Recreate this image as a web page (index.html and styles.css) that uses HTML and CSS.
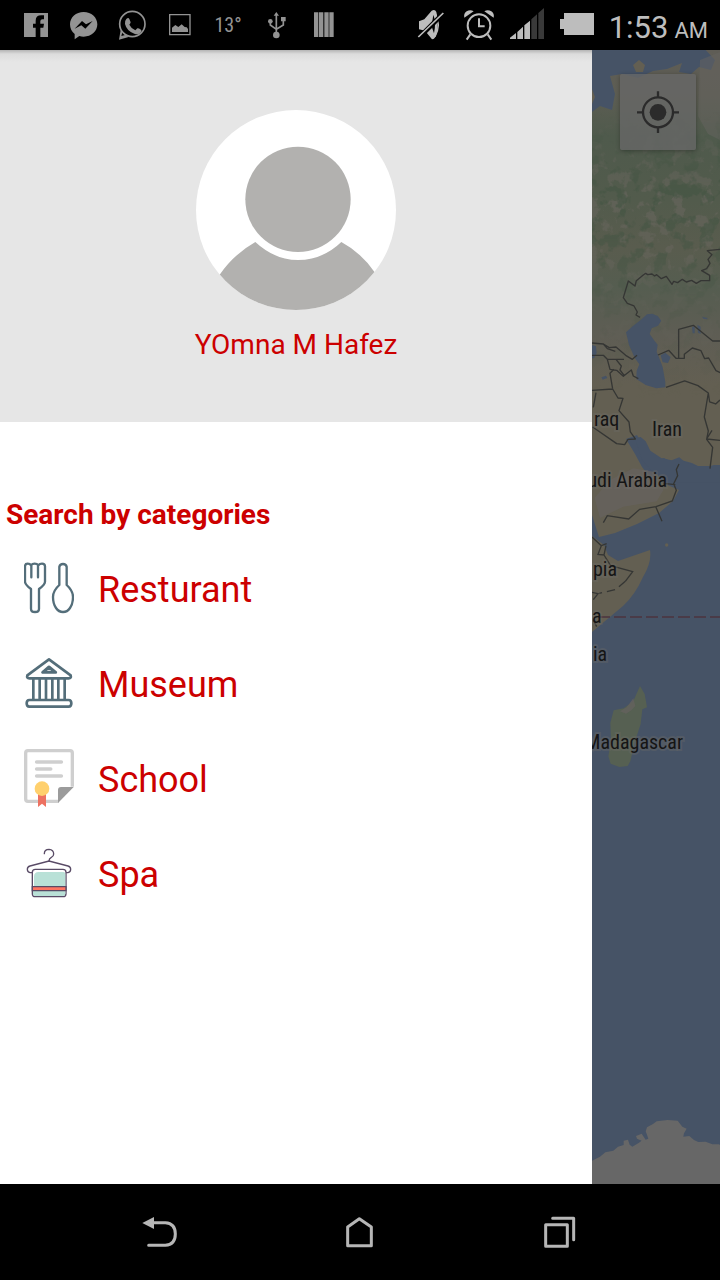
FILE: index.html
```html
<!DOCTYPE html>
<html lang="en">
<head>
<meta charset="utf-8">
<meta name="viewport" content="width=device-width, initial-scale=1">
<title>Search by categories</title>
<link rel="stylesheet" href="styles.css">
</head>
<body>
<div class="screen">
  <header class="status">
    <div class="notices">
      <svg class="notice" viewBox="36 0 144 150" aria-hidden="true"><path fill="#939393" d="M72 39h72v72H72z"/><path d="M107 111V83h-8V71h8v-9q0-16 17-16h8v12h-5q-6 0-6 6v7h11l-2 12h-9v28z"/></svg>
      <svg class="notice" viewBox="180 0 144 150" aria-hidden="true"><path fill="#939393" d="M251 36c23 0 41 16 41 37s-18 37-41 37q-7 0-13-2l-14 10v-16c-9-7-14-17-14-29 0-21 18-37 41-37z"/><path d="M224 86l22-23 12 10 20-10-22 23-12-10z"/></svg>
      <svg class="notice" viewBox="324 0 144 150" aria-hidden="true"><g fill="none" stroke="#939393" stroke-width="5"><circle cx="397" cy="72" r="38"/></g><path fill="#939393" d="M362 90l-5 29 29-8-8-7-14 4 4-14z"/><path fill="#939393" d="M379 57q6-6 9 0l4 10q0 3-4 7 6 12 18 17l6-6q3-1 11 4 3 2 0 7-7 10-20 5-23-8-28-29-1-10 4-15z"/></svg>
      <svg class="notice" viewBox="468 0 144 150" aria-hidden="true"><path fill="none" stroke="#939393" stroke-width="4" d="M509 44h61v60h-61z"/><path fill="#939393" d="M516 96V83l10-8 9 6 10-8 9 8 6 1 4 5v9z"/></svg>
      <span class="notice temp">13°</span>
      <svg class="notice" viewBox="756 0 144 150" aria-hidden="true"><g fill="none" stroke="#939393" stroke-width="5"><path d="M829 42v60M811 65v10l18 13 21-13V58"/></g><g fill="#939393"><path d="M829 36l8 11h-16zM843 51h14v13h-14z"/><circle cx="811" cy="64" r="7"/><circle cx="829" cy="105" r="10"/></g></svg>
      <svg class="notice" viewBox="900 0 144 150" aria-hidden="true"><path fill="#939393" d="M942 37h13v74h-13zM957 37h13v74h-13zM973 37h13v74h-13zM988 37h13v74h-13z"/></svg>
    </div>
    <div class="system">
      <svg class="sys" viewBox="54 0 96 150" aria-hidden="true"><path fill="#bdbdbd" d="M60 64l16-6 22-26q10-6 14 4 8 36 1 64-4 18-14 18L78 92l-18-4z"/><path fill="none" stroke="#bdbdbd" stroke-width="4" d="M108 38q20 36 0 72"/><path d="M103 44q9 22 2 56-8-16-6-30z"/><path stroke="#000" stroke-width="14" d="M60 113l74-74"/><path stroke="#bdbdbd" stroke-width="5" d="M58 111l75-72"/></svg>
      <svg class="sys" viewBox="192 0 96 150" aria-hidden="true"><g fill="none" stroke="#bdbdbd" stroke-width="6"><circle cx="240" cy="77" r="34"/><path d="M240 55v24h17M214 103l-11 16M266 103l11 16"/></g><g fill="#bdbdbd"><path d="M196 53q-3-12 7-19 11-7 21 0zM284 53q3-12-7-19-11-7-21 0z"/></g></svg>
      <svg class="sys" viewBox="330 0 108 150" aria-hidden="true"><path fill="#bdbdbd" d="M333 117v-4l18-14v18zM355 117V96l17-16v37zM376 117V76l17-14v55z"/><path fill="#393939" d="M397 117V58l17-15v74zM418 117V39l17-15v93z"/></svg>
      <svg class="sys" viewBox="480 0 108 150" aria-hidden="true"><path fill="#bdbdbd" d="M495 39h90v66h-90V87h-12V57h12z"/></svg>
      <time class="clock">1:53 <small class="ampm">AM</small></time>
    </div>
  </header>

  <main class="content">
    <aside class="drawer">
      <section class="profile">
        <svg class="avatar" viewBox="48 30 600 600" role="img" aria-label="Profile picture"><clipPath id="disc"><circle cx="348" cy="330" r="300"/></clipPath><g clip-path="url(#disc)"><path fill="#fff" d="M48 30h600v600H48z"/><path fill="#b2b1af" d="M119 524Q162 462 226 426Q284 480 354 480Q428 480 484 426Q544 458 584 517V640H119z"/><circle cx="354" cy="298" r="158" fill="#b2b1af"/></g></svg>
        <p class="name">YOmna M Hafez</p>
      </section>
      <nav class="categories" aria-labelledby="cat-title">
        <h2 class="title" id="cat-title">Search by categories</h2>
        <ul class="list">
          <li><a class="item" href="#restaurant">
            <svg class="icon" viewBox="72 204 150 180" aria-hidden="true"><g fill="none" stroke="#546e7a" stroke-width="7" stroke-linecap="round" stroke-linejoin="round"><path d="M75 229q0-8 8-8 7 0 10 5 4-5 11-5t11 5q4-5 11-5 9 0 9 8v46q0 8-18 22v59q0 10-12 10t-12-10v-59Q75 283 75 275zM94 228v34M114 228v34"/><path d="M178 230q2-8 11-8t11 8v55q19 17 19 36 0 20-9 33-8 12-21 12t-21-12q-9-13-9-33 0-19 19-36z"/></g></svg>
            <span class="label">Resturant</span></a></li>
          <li><a class="item" href="#museum">
            <svg class="icon" viewBox="72 39 150 180" aria-hidden="true"><g fill="none" stroke="#546e7a" stroke-width="8" stroke-linejoin="round"><path d="M147 58L82 106q-3 9 6 9h118q9 0 6-9zM88 180h118q8 0 8 10t-8 10H88q-8 0-8-10t8-10zM100 115v65M119 115v65M138 115v65M157 115v65M175 115v65M194 115v65"/><path stroke-width="9" d="M147 81l-19 16h39z"/></g></svg>
            <span class="label">Museum</span></a></li>
          <li><a class="item" href="#school">
            <svg class="icon" viewBox="72 324 150 180" aria-hidden="true"><path fill="none" stroke="#cfcfcf" stroke-width="10" d="M217 440V339q0-7-7-7H84q-7 0-7 7v138q0 7 7 7h92"/><path fill="#9b9b9b" d="M174 489v-39q0-9 9-9h38z"/><path stroke="#cfcfcf" stroke-width="11" stroke-linecap="round" d="M110 366h74M110 387h42M110 408h74"/><path fill="#ed7161" d="M114 460h24v41l-12-10-12 10z"/><circle cx="126" cy="446" r="22" fill="#ffd06d"/></svg>
            <span class="label">School</span></a></li>
          <li><a class="item" href="#spa">
            <svg class="icon" viewBox="72 39 150 180" aria-hidden="true"><g fill="#fff" stroke="#594b66" stroke-width="4" stroke-linecap="round"><path d="M133 71q0-13 14-13 14 1 14 14 0 7-7 10-7 3-7 11"/><path d="M97 128H90q-8-1-8-10 0-8 8-10l57-15 57 15q8 2 8 10 0 9-8 10h-7"/><rect x="97" y="118" width="101" height="82" rx="9"/></g><path fill="#b9e1d7" d="M102 169v-29q0-14 14-14h74q6 0 6 6v37zM99 183h97v8q0 7-7 7h-83q-7 0-7-7z"/><path fill="#ff7562" stroke="#594b66" stroke-width="4" d="M97 170h101v12H97z"/></svg>
            <span class="label">Spa</span></a></li>
        </ul>
      </nav>
    </aside>

    <section class="map" aria-label="Map">
      <svg class="chart" viewBox="592 50 128 1134" preserveAspectRatio="xMinYMin slice">
        <defs>
          <filter id="woods" x="0" y="0" width="100%" height="100%" color-interpolation-filters="sRGB"><feTurbulence type="fractalNoise" baseFrequency=".07" numOctaves="4" seed="4"/><feColorMatrix values="0 0 0 0 .41 0 0 0 0 .4 0 0 0 0 .37 10 0 0 0 -5.4"/><feComposite in2="SourceGraphic" operator="in"/></filter>
          <filter id="scrub" x="0" y="0" width="100%" height="100%" color-interpolation-filters="sRGB"><feTurbulence type="fractalNoise" baseFrequency=".06" numOctaves="4" seed="9"/><feColorMatrix values="0 0 0 0 .26 0 0 0 0 .33 0 0 0 0 .26 10 0 0 0 -5.4"/><feComposite in2="SourceGraphic" operator="in"/></filter>
          <linearGradient id="fade" x1="0" y1="110" x2="0" y2="400" gradientUnits="userSpaceOnUse"><stop offset="0" stop-opacity="0"/><stop offset=".3" stop-opacity="1"/><stop offset=".5" stop-opacity=".8"/><stop offset=".65" stop-opacity=".3"/><stop offset="1" stop-opacity="0"/></linearGradient>
          <linearGradient id="climate" x1="0" y1="50" x2="0" y2="480" gradientUnits="userSpaceOnUse"><stop offset="0" stop-color="#5f5d56"/><stop offset=".1" stop-color="#5d5d53"/><stop offset=".2" stop-color="#4f5a4c"/><stop offset=".35" stop-color="#525b4c"/><stop offset=".46" stop-color="#595c4e"/><stop offset=".55" stop-color="#555d50"/><stop offset=".66" stop-color="#5e5d54"/><stop offset=".78" stop-color="#635f52"/><stop offset="1" stop-color="#635f52"/></linearGradient>
        </defs>
        <path fill="#465366" d="M592 50h128v1134H592z"/>
        <path fill="url(#climate)" d="M592 112l8-6 12 4 3-16-5-18 12-2 16 4 15-7 14-2 15-6-3 9 12 2 8-7 12 3 4-10-13-14h30v419h-18l-12 3-10-5-11-3-9 2-8-4-12 3-7-12-8-14-11 4 9 15 7 13 10 13 4-7 7 10 16 7-6 11-14 12-22 11-22 9-16 4-7-22-10-22z"/>
        <path fill="#66635f" d="M700 60l20-8v88l-12-6-10-18z" opacity=".5"/>
        <path filter="url(#woods)" opacity=".6" fill="url(#fade)" d="M592 112h128v288H592z"/>
        <path filter="url(#scrub)" opacity=".6" fill="url(#fade)" d="M592 112h128v288H592z"/>
        <path fill="#635f52" d="M592 536l12 9 4 10 10 6 32-11q2 12-7 27-8 18-20 29l-31 26zM633 65l6-5 6 5-2 7h-7zM592 89l3 8-3 7z"/>
        <g transform="translate(580 240) scale(.3333)">
          <path fill="#465366" d="M138 277l20-18 25-20 18-16 16-2 16 7 11 14-10 15-19 8-6 17 15 21 9 11-3 21 8 20 10 26 8 45v16l-27 3-32-10-28-18 1-25 8-19-14-20-17-38zM242 346l14-8 16 14-8 17-16-2zM36 315l12 4 2 20-8 16h-6zM64 412l14-5 4 7-14 5zM336 262l8-4v22h-6zM352 254l10 6v22l-8-4zM366 230l16 4v4l-12-2zM165 595l17-4 15 13 14 28 34 23 30 6 23-9 17 15 36 11h69v50H300l-50-10-40-30-25-30z"/>
          <g fill="none" stroke="#353634" stroke-width="4" stroke-linejoin="round"><path d="M420 28l-38 4 14 12-12 14 6 12-10 16-15 6 24 14v16h-26l-14 8-14-9-16 5-12-8-14 10-12-4-5 9-17-24-15 7-14-12-6 4-8-6-13 2-6-4-8 6-20 16-4 16-20-15-15 50 12 17 20 8 10 18-4 9 12 7"/><path d="M296 355V268l44-12 58 47h22M234 345l32-14 22 24h25v-12l24-19 26 8 11 24 12-2 22 38 18 8M36 309l34 3 18 11 20-2 29 25 20 12 14-12M36 346h34l12 12h50M70 312l12 14 24 8M82 358l8 30 20 3 20 18 24-19 6 18 15 8M108 358l16 20-4 12 13 17M36 451l62-4M98 447l16 27 15 1-12 37 30 34 4 30 15 21-22 1-10 16-24-3-72-50M48 458l-8 44M98 447l-8-47 12-12M258 442l56-19 40 14 31 22-12 72 12 42-5 25 18 24-8 64M385 459l4 27 18 6 13-12M396 571l-16 26 40 4"/></g>
        </g>
        <g transform="translate(580 460) scale(.3333)">
          <path fill="#66635f" opacity=".7" d="M90 60l70-35 60 10 30 55-20 34-100 16-70 34-16-60z"/>
          <g fill="none" stroke="#353634" stroke-width="4"><path d="M70 188l12-21 64 10 33-29 49-8 49-17 12-32-8-20 12-24-4-18 8-17M250 70l36 4M228 142l18 42M36 231l28 26-10 26 18 2 6-28M64 257l16-6M72 285l20 32 66 18-22 29M36 397l18 4-14 18M40 480l10 20"/><path stroke-dasharray="25 15" d="M136 364l-30 25-48 11"/></g>
          <path fill="none" stroke="#4c343f" stroke-width="5" stroke-dasharray="36 12" d="M54 471h366"/>
          <circle cx="260" cy="255" r="5" fill="#635f52"/>
        </g>
        <g transform="translate(580 640) scale(.3333)"><path fill="#566052" d="M180 138l14 24 7 40-14 6-5 44-17 52-14 60-8 14-25 3-26-10-7-22 8-46-2-54 10-38 30-6 28-20z"/><path fill="#64615e" d="M120 214l20-12 20-27 6 23-12 13-16 10z" opacity=".8"/></g>
        <path fill="#676767" transform="translate(580 1090) scale(.3333)" d="M36 212l24-12 16-13 24-5 14-12 17-5v-13l13-3 5 15 8 6 20-12 8-6-14-6-3-8 17-7 12 18 8-3-4-12-4-10 4-12 18-10 11-8 33-4 30 2 14 18 13 6-8 14-2 10 18-2 14 12 13 6 22-1 20 8h20l7 4v118H36z"/>
        <g class="places"><text x="594" y="426">raq</text><text x="652" y="436">Iran</text><text x="667" y="487" text-anchor="end">udi Arabia</text><text x="593" y="576">pia</text><text x="592" y="623">a</text><text x="593" y="661">ia</text><text x="683" y="749" text-anchor="end">Madagascar</text></g>
      </svg>
      <button class="locate" type="button" aria-label="My location"><svg class="target" viewBox="171 122 126 126" aria-hidden="true"><g fill="none" stroke="#2b2b2b" stroke-width="7"><circle cx="234" cy="186" r="45"/><path d="M234 123v20M234 229v20M171 186h20M277 186h20"/></g><circle cx="234" cy="186" r="25" fill="#2b2b2b"/></svg></button>
    </section>
  </main>

  <footer class="keys">
    <button class="key" type="button" aria-label="Back"><svg class="glyph" viewBox="60 66 120 120" aria-hidden="true"><path fill="none" stroke="#b6b6b6" stroke-width="9" stroke-linecap="round" d="M98 98h38q30 2 30 34t-30 34H86"/><path fill="#b6b6b6" d="M67 99l35-18v36z"/></svg></button>
    <button class="key" type="button" aria-label="Home"><svg class="glyph" viewBox="660 66 120 120" aria-hidden="true"><path fill="none" stroke="#b6b6b6" stroke-width="9" stroke-linejoin="round" d="M718 86l36 25v56h-71v-56z"/></svg></button>
    <button class="key" type="button" aria-label="Recent apps"><svg class="glyph" viewBox="1260 66 120 120" aria-hidden="true"><g fill="none" stroke="#b6b6b6" stroke-width="9" stroke-linecap="round" stroke-linejoin="round"><path d="M1277 104h65v65h-65zM1298 85h63v64"/></g></svg></button>
  </footer>
</div>
</body>
</html>
```
FILE: styles.css
```css
* {
  box-sizing: border-box;
}

body {
  margin: 0;
  font-family: Roboto, "Noto Sans", sans-serif;
  color: #cc0000;
  background: #000;
}

button {
  padding: 0;
  border: 0;
  background: none;
}

.screen {
  display: flex;
  flex-direction: column;
  min-height: 100vh;
}

.status {
  display: flex;
  justify-content: space-between;
  height: 50px;
  padding: 0 12px;
  background: #000;
}

.notices,
.system {
  display: flex;
  align-items: center;
}

.notice {
  width: 48px;
  height: 50px;
}

.temp {
  color: #939393;
  font-family: "Roboto Condensed", "Liberation Sans Narrow", Roboto, sans-serif;
  font-size: 20px;
  line-height: 50px;
  text-align: center;
}

.system {
  gap: 14px;
}

.sys {
  height: 50px;
}

.clock {
  display: flex;
  align-items: baseline;
  gap: 6px;
  padding-top: 4px;
  color: #bdbdbd;
  font-size: 31px;
  white-space: nowrap;
}

.ampm {
  font-size: 22px;
}

.content {
  display: flex;
  flex: 1;
}

.drawer {
  flex: 1;
  background: #fff;
}

.profile {
  display: flex;
  flex-direction: column;
  align-items: center;
  gap: 18px;
  padding: 60px 16px;
  background: linear-gradient(#b4b4b4, #dcdcdc 4px, #e6e6e6 12px);
}

.avatar {
  width: 200px;
  height: 200px;
}

.name {
  margin: 0;
  font-size: 28px;
  line-height: 34px;
}

.categories {
  padding-top: 76px;
}

.title {
  margin: 0 0 9px;
  padding-left: 6px;
  font-size: 28px;
  line-height: 33px;
}

.list {
  margin: 0;
  padding: 0;
  list-style: none;
}

.item {
  display: flex;
  align-items: center;
  gap: 24px;
  height: 95px;
  padding: 0 24px;
  color: inherit;
  text-decoration: none;
}

.icon {
  width: 50px;
  height: 60px;
}

.label {
  padding-top: 4px;
  font-size: 36px;
}

.map {
  position: relative;
  flex: 0 0 128px;
  overflow: hidden;
  background: #465366;
}

.chart {
  position: absolute;
  inset: 0;
  width: 100%;
  height: 100%;
}

.places {
  fill: #151515;
  stroke: rgba(110, 108, 104, 0.35);
  stroke-width: 4px;
  paint-order: stroke;
  font-family: "Roboto Condensed", Roboto, sans-serif;
  font-size: 20px;
}

.locate {
  position: absolute;
  top: 24px;
  right: 24px;
  display: grid;
  place-items: center;
  width: 76px;
  height: 76px;
  border-radius: 2px;
  background: rgba(104, 104, 104, 0.75);
  box-shadow: 0 1px 4px rgba(0, 0, 0, 0.3);
}

.target {
  width: 42px;
  height: 42px;
}

.keys {
  display: flex;
  height: 96px;
  padding: 0 60px;
  background: #000;
}

.key {
  display: grid;
  flex: 1;
  place-items: center;
}

.glyph {
  width: 40px;
  height: 40px;
}
```
